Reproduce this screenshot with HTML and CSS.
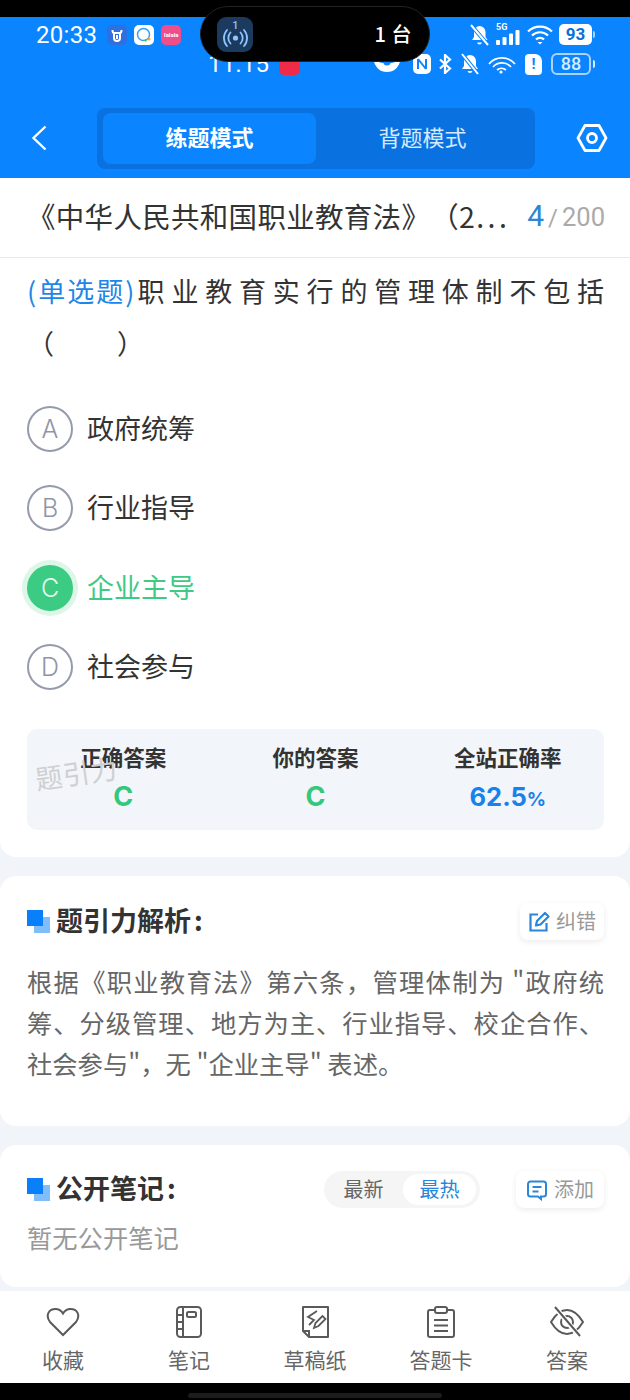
FILE: index.html
```html
<!DOCTYPE html>
<html lang="zh-CN">
<head>
<meta charset="utf-8">
<title>题引力</title>
<link rel="stylesheet" href="styles.css">
</head>
<body>
<div class="screen">
  <div class="top-strip"></div>
  <div class="island">
    <span class="island-icon">
      <svg viewBox="0 0 35 34" width="35" height="34"><text x="17.500" y="12" class="island-num">1</text><circle cx="17.500" cy="21" r="2.600" fill="#8ec5ff"/><path d="M12.500 15.500a8 8 0 0 0 0 11M22.500 15.500a8 8 0 0 1 0 11M9 13a12 12 0 0 0 0 16M26 13a12 12 0 0 1 0 16" fill="none" stroke="#8ec5ff" stroke-width="1.800" stroke-linecap="round"/></svg>
    </span>
    <span class="island-text">1 台</span>
  </div>
  <header class="header">
    <div class="status status-one">
      <span class="clock">20:33</span>
      <span class="app app-u">
        <svg viewBox="0 0 20 20" width="20" height="20"><path d="M5.500 5c0 2 1 3 1.500 3v5a3 3 0 0 0 6 0V8c.5 0 1.500-1 1.500-3M7 8h6M10 10v4" fill="none" stroke="#fff" stroke-width="2"/></svg>
      </span>
      <span class="app app-chat">
        <svg viewBox="0 0 20 20" width="20" height="20"><circle cx="9.500" cy="9.500" r="6" fill="none" stroke="#39a0f0" stroke-width="1.500"/><circle cx="15" cy="14" r="1.500" fill="#f0a83c"/><circle cx="11.500" cy="15.500" r="1.200" fill="#48c774"/></svg>
      </span>
      <span class="app app-pink"><span class="app-pink-text">lalala</span></span>
      <span class="status-spacer"></span>
      <svg class="si" viewBox="0 0 21 22" width="21" height="22"><path d="M10.500 2a6 6 0 0 1 6 6v5l2 3H3l2-3V8a6 6 0 0 1 5.500-6zM8 18.500a2.600 2.600 0 0 0 5 0z" fill="#fff"/><path d="M2 1l17 20" stroke="#0a84ff" stroke-width="4"/><path d="M2 1l17 20" stroke="#fff" stroke-width="2"/></svg>
      <span class="signal">
        <span class="signal-5g">5G</span>
        <svg viewBox="0 0 24 15" width="24" height="15"><rect x="0" y="10" width="4" height="5" rx="1" fill="#fff"/><rect x="6.500" y="7" width="4" height="8" rx="1" fill="#fff"/><rect x="13" y="3.500" width="4" height="11.500" rx="1" fill="#fff"/><rect x="19.500" y="0" width="4" height="15" rx="1" fill="#fff"/></svg>
      </span>
      <svg class="si" viewBox="0 0 26 20" width="26" height="20"><path d="M1 6.500a17 17 0 0 1 24 0M5 10.500a11.500 11.500 0 0 1 16 0M9 14.500a5.600 5.600 0 0 1 8 0" fill="none" stroke="#fff" stroke-width="2.200"/><path d="M10.500 17h5l-2.500 2.500z" fill="#fff"/></svg>
      <span class="battery-full">93</span>
    </div>
    <div class="status status-two">
      <span class="clock clock-two">11:15</span>
      <span class="app-red"></span>
      <span class="status-spacer"></span>
      <svg class="si2" viewBox="0 0 30 18" width="30" height="18"><path d="M1 3c4 7 24 7 28 0c-2 10-7 14-14 14S3 13 1 3z" fill="#fff"/><circle cx="15" cy="7" r="3.500" fill="#0a84ff"/></svg>
      <svg class="si2 si-nfc" viewBox="0 0 20 22" width="20" height="22"><rect x="1" y="1" width="18" height="20" rx="5" fill="#fff"/><path d="M6 6v10M14 6v10M6 6l8 10" fill="none" stroke="#0a84ff" stroke-width="2"/></svg>
      <svg class="si2" viewBox="0 0 14 20" width="14" height="20"><path d="M2 5.500l10 9-5 4.500V1l5 4.500-10 9" fill="none" stroke="#fff" stroke-width="2.200"/></svg>
      <svg class="si2" viewBox="0 0 20 22" width="20" height="22"><path d="M10 2a6 6 0 0 1 6 6v5l2 3H2l2-3V8a6 6 0 0 1 6-6zM7.500 18a2.600 2.600 0 0 0 5 0z" fill="#fff"/><path d="M2 1l16 20" stroke="#0a84ff" stroke-width="4"/><path d="M2 1l16 20" stroke="#fff" stroke-width="2"/></svg>
      <svg class="si2" viewBox="0 0 28 20" width="28" height="20"><path d="M1 10a17 17 0 0 1 26 0M5 13a12 12 0 0 1 18 0M9 16a7 7 0 0 1 9 0" fill="none" stroke="#fff" stroke-width="1.700"/><circle cx="13" cy="18" r="1.600" fill="#fff"/></svg>
      <span class="sim">!</span>
      <span class="battery-line">88</span>
    </div>
    <nav class="nav">
      <svg class="nav-back" viewBox="0 0 16 26" width="16" height="26"><path d="M14.500 1.500L2.500 13l12 11.500" fill="none" stroke="#fff" stroke-width="2.400"/></svg>
      <div class="mode">
        <span class="mode-item mode-active">练题模式</span>
        <span class="mode-item">背题模式</span>
      </div>
      <svg class="nav-set" viewBox="0 0 32 30" width="32" height="30"><path d="M9 2.500h14L30 15l-7 12.500H9L2 15z" fill="none" stroke="#fff" stroke-width="2.800" stroke-linejoin="round"/><circle cx="16" cy="15" r="4.500" fill="none" stroke="#fff" stroke-width="2.800"/></svg>
    </nav>
  </header>

  <section class="title-row">
    <h1 class="title">《中华人民共和国职业教育法》（2<span class="title-dots">...</span></h1>
    <div class="count"><b class="count-now">4</b><span class="count-slash">/</span><span class="count-all">200</span></div>
  </section>

  <section class="card card-question">
    <p class="q-line"><span class="q-type">(单选题)</span><span class="q-text">职业教育实行的管理体制不包括</span></p>
    <p class="q-blank"><span>（</span><span class="q-gap"></span><span>）</span></p>
    <ul class="options">
      <li class="option"><span class="letter">A</span><span class="option-text">政府统筹</span></li>
      <li class="option"><span class="letter">B</span><span class="option-text">行业指导</span></li>
      <li class="option option-right"><span class="letter">C</span><span class="option-text">企业主导</span></li>
      <li class="option"><span class="letter">D</span><span class="option-text">社会参与</span></li>
    </ul>
    <div class="result">
      <div class="result-col"><span class="result-label">正确答案</span><b class="result-green">C</b></div>
      <div class="result-col"><span class="result-label">你的答案</span><b class="result-green">C</b></div>
      <div class="result-col"><span class="result-label">全站正确率</span><b class="result-blue">62.5<small>%</small></b></div>
      <span class="watermark">题引力</span>
    </div>
  </section>

  <section class="card card-analysis">
    <div class="sec-head">
      <span class="sec-mark"></span>
      <h2 class="sec-title">题引力解析<span class="sec-colon">:</span></h2>
      <span class="sec-fill"></span>
      <button class="chip">
        <svg viewBox="0 0 22 22" width="22" height="22"><path d="M10 3.500H2.500v16h16V12" fill="none" stroke="#2a86d8" stroke-width="2.200"/><path d="M8 14.500l1-4.500 8-8 3.500 3.500-8 8z" fill="none" stroke="#2a86d8" stroke-width="2.200" stroke-linejoin="round"/></svg>
        <span class="chip-text">纠错</span>
      </button>
    </div>
    <p class="analysis-text">根据《职业教育法》第六条，管理体制为 "政府统筹、分级管理、地方为主、行业指导、校企合作、社会参与"，无 "企业主导" 表述。</p>
  </section>

  <section class="card card-notes">
    <div class="sec-head">
      <span class="sec-mark"></span>
      <h2 class="sec-title">公开笔记<span class="sec-colon">:</span></h2>
      <span class="sec-fill"></span>
      <div class="toggle">
        <span class="toggle-item">最新</span>
        <span class="toggle-item toggle-active">最热</span>
      </div>
      <button class="chip chip-add">
        <svg viewBox="0 0 22 22" width="22" height="22"><path d="M4.500 2.500h13a2.500 2.500 0 0 1 2.500 2.500v10a2.500 2.500 0 0 1-2.500 2.500H15v2.500l-3-2.500H4.500A2.500 2.500 0 0 1 2 15V5a2.500 2.500 0 0 1 2.500-2.500z" fill="none" stroke="#2a86d8" stroke-width="2"/><path d="M6.500 8h9M6.500 12.500h6" stroke="#2a86d8" stroke-width="2"/></svg>
        <span class="chip-text">添加</span>
      </button>
    </div>
    <p class="notes-empty">暂无公开笔记</p>
  </section>

  <footer class="tabbar">
    <div class="tab">
      <svg viewBox="0 0 34 32" width="34" height="32"><path d="M17 29L4 16C-1 9 3 3 9.500 3c3.500 0 6 2 7.500 4.500C18.500 5 21 3 24.500 3 31 3 35 9 30 16z" fill="none" stroke="#5a5a5a" stroke-width="2"/></svg>
      <span>收藏</span>
    </div>
    <div class="tab">
      <svg viewBox="0 0 34 32" width="34" height="32"><rect x="5" y="1" width="24" height="30" rx="3.500" fill="none" stroke="#5a5a5a" stroke-width="2"/><path d="M11 1v30M5 9h6M5 16h6M5 23h6" stroke="#5a5a5a" stroke-width="2"/><rect x="15" y="6" width="9" height="5" rx="1.500" fill="none" stroke="#5a5a5a" stroke-width="2"/></svg>
      <span>笔记</span>
    </div>
    <div class="tab">
      <svg viewBox="0 0 34 32" width="34" height="32"><path d="M5 1h25v30H11l-6-6z" fill="none" stroke="#5a5a5a" stroke-width="2" stroke-linejoin="round"/><path d="M5 25h6v6" fill="none" stroke="#5a5a5a" stroke-width="2"/><path d="M19 5l-9 6 6 3-5 5" fill="none" stroke="#5a5a5a" stroke-width="1.800"/><path d="M16 22l1.500-5 7-7 3 3-7 7z" fill="none" stroke="#5a5a5a" stroke-width="1.800"/></svg>
      <span>草稿纸</span>
    </div>
    <div class="tab">
      <svg viewBox="0 0 34 32" width="34" height="32"><path d="M10 4H6a2 2 0 0 0-2 2v23a2 2 0 0 0 2 2h22a2 2 0 0 0 2-2V6a2 2 0 0 0-2-2h-4" fill="none" stroke="#5a5a5a" stroke-width="2"/><rect x="11" y="1" width="12" height="6" rx="2" fill="none" stroke="#5a5a5a" stroke-width="2"/><path d="M10 14h14M10 19.500h14M10 25h14" stroke="#5a5a5a" stroke-width="2"/></svg>
      <span>答题卡</span>
    </div>
    <div class="tab">
      <svg viewBox="0 0 34 32" width="34" height="32"><path d="M1 16C7 6 12 4 17 4s10 2 16 12c-6 10-11 12-16 12S7 26 1 16z" fill="none" stroke="#5a5a5a" stroke-width="2"/><circle cx="17" cy="16" r="6" fill="none" stroke="#5a5a5a" stroke-width="2"/><path d="M4 0l26 31" stroke="#fff" stroke-width="5"/><path d="M5 1l25 29" stroke="#5a5a5a" stroke-width="2"/></svg>
      <span>答案</span>
    </div>
  </footer>
  <div class="nav-strip"><span class="home-bar"></span></div>
</div>
</body>
</html>
```

FILE: styles.css
```css
* { box-sizing: border-box; }
html, body { margin: 0; padding: 0; }
body {
  width: 630px;
  height: 1400px;
  overflow: hidden;
  background: #f1f4f8;
  font-family: "Noto Sans CJK SC", "Noto Sans", sans-serif;
  color: #333;
  text-spacing-trim: space-all;
}
p, h1, h2, ul { margin: 0; padding: 0; }
ul { list-style: none; }
button { font-family: inherit; border: 0; padding: 0; }

.screen { position: relative; width: 630px; height: 1400px; display: flex; flex-direction: column; }
.top-strip { height: 17px; background: #000; flex: none; }

.island {
  position: absolute;
  left: 200px; top: 6px;
  width: 230px; height: 56px;
  border-radius: 28px;
  background: #000;
  border: 1px solid #222;
  z-index: 3;
  display: flex;
  align-items: center;
  justify-content: space-between;
  padding: 0 17px 0 16px;
}
.island-icon { width: 36px; height: 35px; border-radius: 9px; background: #1c3a5e; display: flex; align-items: center; justify-content: center; }
.island-num { fill: #8ec5ff; font: 500 11px "Roboto", sans-serif; text-anchor: middle; }
.island-text { color: #fff; font-size: 20px; line-height: 1; font-weight: 500; letter-spacing: .5px; }

.header { flex: none; height: 161px; background: #0a84ff; padding-top: 7px; display: flex; flex-direction: column; }
.status { display: flex; align-items: center; }
.status-spacer { flex: 1; }
.status-one { height: 21px; padding: 0 38px 0 36px; gap: 7px; }
.clock { font-family: "Roboto", sans-serif; font-size: 24px; color: #fff; line-height: 1; margin-right: 3px; letter-spacing: .3px; }
.app { width: 20px; height: 20px; border-radius: 5px; flex: none; display: flex; align-items: center; justify-content: center; }
.app-u { background: #2f6fe0; }
.app-chat { background: #fff; }
.app-pink { background: #ee4f8b; }
.app-pink-text { color: #fff; font: 700 6px "Roboto", sans-serif; }
.si { flex: none; }
.signal { position: relative; display: flex; align-items: flex-end; height: 21px; margin-left: -1px; }
.signal-5g { position: absolute; left: 0; top: -2px; color: #fff; font: 700 9px/10px "Roboto", sans-serif; }
.battery-full { position: relative; width: 33px; height: 21px; margin-left: -1px; border-radius: 5px; background: #fff; color: #0a6fd8; font: 700 17px/21px "Roboto", sans-serif; text-align: center; }
.battery-full::after { content: ""; position: absolute; right: -3px; top: 7px; width: 2px; height: 7px; border-radius: 0 2px 2px 0; background: #a8d4ff; }

.status-two { height: 26px; margin-top: 6px; padding: 0 39px 0 208px; gap: 8px; }
.clock-two { margin-right: 1px; }
.app-red { width: 21px; height: 22px; margin-left: 1px; border-radius: 5px; background: #f02b48; flex: none; }
.si2 { flex: none; }
.si-nfc { margin: 0 -2px 0 2px; }
.sim { width: 17px; height: 21px; margin: 0 1px; border-radius: 4px 7px 4px 4px; background: #fff; color: #0a84ff; font: 700 15px/21px "Roboto", sans-serif; text-align: center; }
.battery-line { position: relative; width: 40px; height: 22px; border: 2px solid #a8d4ff; border-radius: 6px; color: #d8ecff; font: 500 18px/18px "Roboto", sans-serif; text-align: center; }
.battery-line::after { content: ""; position: absolute; right: -6px; top: 5px; width: 2px; height: 8px; border-radius: 0 2px 2px 0; background: #d8ecff; }

.nav { display: flex; align-items: center; margin-top: 31px; padding: 0 22px 0 31px; height: 61px; }
.nav-back { flex: none; margin-top: -2px; }
.mode { width: 438px; height: 61px; margin-left: 50px; padding: 5px 6px; border-radius: 8px; background: #0a72e0; display: flex; }
.mode-item { flex: 1; display: flex; align-items: center; justify-content: center; padding-bottom: 6px; color: #d6eaff; font-size: 22px; border-radius: 8px; }
.mode-active { flex: none; width: 213px; background: #0a84ff; color: #fff; font-weight: 700; }
.nav-set { flex: none; margin-left: 41px; margin-top: -1px; }

.title-row { flex: none; height: 80px; background: #fff; border-bottom: 1px solid #e9e9e9; display: flex; align-items: center; padding: 0 25px 4px 27px; }
.title { flex: 1; min-width: 0; font-size: 28.5px; font-weight: 400; color: #333; white-space: nowrap; letter-spacing: .3px; }
.title-dots { letter-spacing: 3.500px; margin-left: 1px; }
.count { flex: none; display: flex; align-items: baseline; font-family: "Roboto", sans-serif; }
.count-now { font-size: 30px; font-weight: 400; color: #2a86d8; margin-right: 4px; }
.count-slash { font-size: 24px; color: #aaa; margin-right: 4px; }
.count-all { font-size: 25.5px; color: #aaa; }

.card { background: #fff; flex: none; border-radius: 16px; }
.card-question { border-radius: 0 0 16px 16px; padding: 7px 26px 27px 27px; height: 599px; }
.q-line { display: flex; justify-content: space-between; height: 52px; font-size: 27px; line-height: 52px; white-space: nowrap; }
.q-type { color: #1f86e8; letter-spacing: 2px; }
.q-text { color: #333; letter-spacing: 6.8px; margin-right: -6.8px; }
.q-blank { display: flex; height: 52px; font-size: 27px; line-height: 52px; color: #333; }
.q-gap { width: 63px; }

.options { margin-top: 20px; }
.option { height: 79.5px; display: flex; align-items: center; gap: 14px; font-size: 27px; color: #333; }
.option-text { padding-bottom: 3px; }
.letter { width: 46px; height: 46px; border-radius: 50%; border: 2px solid #969bac; display: flex; align-items: center; justify-content: center; color: #8f95a8; font: 300 25px "Inter", sans-serif; flex: none; }
.option-right { color: #3ec985; }
.option-right .letter { background: #3bcb82; border-color: #3bcb82; color: #e4f9ef; box-shadow: 0 0 0 5px #dcf6e8; }

.result { position: relative; margin-top: 22px; height: 101px; background: #f2f5f9; border-radius: 10px; display: flex; padding-top: 12px; }
.result-col { flex: 1; display: flex; flex-direction: column; align-items: center; }
.result-label { font-size: 21.5px; line-height: 32px; font-weight: 700; color: #333; }
.result-green, .result-blue { font-family: "Inter", "Roboto", sans-serif; line-height: 48px; font-weight: 700; }
.result-green { font-size: 27px; color: #36c77e; }
.result-blue { font-size: 25.5px; color: #1782ea; }
.result-blue small { font-size: 19px; }
.watermark { position: absolute; left: 8px; top: 26px; font-size: 27px; line-height: 36px; letter-spacing: .5px; color: #cfcfd2; transform: rotate(-8deg); }

.card-analysis { margin-top: 19px; height: 250px; padding: 27px 26px 0 27px; }
.card-notes { margin-top: 19px; height: 142px; padding: 26px 26px 0 27px; }
.sec-head { display: flex; align-items: center; height: 37px; }
.sec-mark { width: 23px; height: 23px; flex: none; background: linear-gradient(#0a7ffa, #0a7ffa) 0 0 / 16px 16px no-repeat, linear-gradient(#7fbdfb, #7fbdfb) 100% 100% / 16px 16px no-repeat; margin-right: 6px; }
.sec-title { font-size: 27px; font-weight: 700; color: #333; line-height: 32px; padding-bottom: 3px; }
.sec-colon { margin-left: 3px; }
.sec-fill { flex: 1; }
.chip { height: 37px; width: 84px; border-radius: 8px; background: #fff; box-shadow: 0 2px 6px rgba(0,0,0,.08); display: flex; align-items: center; justify-content: center; gap: 6px; color: #999; font-size: 20px; }
.chip-text { padding-bottom: 3px; }
.chip-add { width: 88px; }
.toggle { width: 156px; height: 37px; margin-right: 36px; padding: 3px 4px 3px 0; border-radius: 19px; background: #f5f5f5; display: flex; font-size: 20px; }
.toggle-item { display: flex; align-items: center; justify-content: center; padding-bottom: 3px; color: #666; flex: 1; border-radius: 15px; }
.toggle-active { flex: none; width: 73px; background: #fff; color: #2a86d8; }

.analysis-text { margin-top: 21px; width: 577px; font-size: 25.3px; line-height: 41px; color: #666; text-align: justify; }
.notes-empty { margin-top: 9px; font-size: 25.3px; line-height: 40px; color: #999; }

.tabbar { flex: none; margin-top: 4px; height: 92px; background: #fff; display: flex; }
.tab { width: 126px; display: flex; flex-direction: column; align-items: center; padding-top: 15px; color: #666; font-size: 21px; line-height: 30px; gap: 6px; }

.nav-strip { flex: 1; background: #000; display: flex; justify-content: center; padding-top: 10px; }
.home-bar { width: 254px; height: 5px; border-radius: 3px; background: #1c1c1c; }
```
